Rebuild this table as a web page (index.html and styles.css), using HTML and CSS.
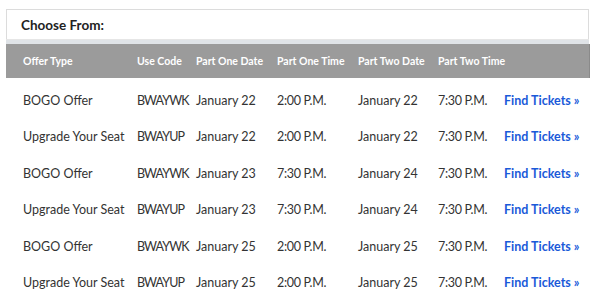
FILE: index.html
```html
<!DOCTYPE html>
<html>
<head>
<meta charset="utf-8">
<link rel="stylesheet" href="styles.css">
</head>
<body>
<div class="wrap">
  <div class="panel-title">Choose From:</div>
  <div class="strip"></div>
  <table class="offers">
    <colgroup>
      <col class="c1"><col class="c2"><col class="c3"><col class="c4"><col class="c5"><col class="c6"><col class="c7">
    </colgroup>
    <thead>
      <tr><th>Offer Type</th><th>Use Code</th><th>Part One Date</th><th>Part One Time</th><th>Part Two Date</th><th>Part Two Time</th><th></th></tr>
    </thead>
    <tbody>
      <tr><td>BOGO Offer</td><td class="code">BWAYWK</td><td>January 22</td><td class="time">2:00 P.M.</td><td>January 22</td><td class="time">7:30 P.M.</td><td><a href="#">Find Tickets »</a></td></tr>
      <tr><td>Upgrade Your Seat</td><td class="code">BWAYUP</td><td>January 22</td><td class="time">2:00 P.M.</td><td>January 22</td><td class="time">7:30 P.M.</td><td><a href="#">Find Tickets »</a></td></tr>
      <tr><td>BOGO Offer</td><td class="code">BWAYWK</td><td>January 23</td><td class="time">7:30 P.M.</td><td>January 24</td><td class="time">7:30 P.M.</td><td><a href="#">Find Tickets »</a></td></tr>
      <tr><td>Upgrade Your Seat</td><td class="code">BWAYUP</td><td>January 23</td><td class="time">7:30 P.M.</td><td>January 24</td><td class="time">7:30 P.M.</td><td><a href="#">Find Tickets »</a></td></tr>
      <tr><td>BOGO Offer</td><td class="code">BWAYWK</td><td>January 25</td><td class="time">2:00 P.M.</td><td>January 25</td><td class="time">7:30 P.M.</td><td><a href="#">Find Tickets »</a></td></tr>
      <tr><td>Upgrade Your Seat</td><td class="code">BWAYUP</td><td>January 25</td><td class="time">2:00 P.M.</td><td>January 25</td><td class="time">7:30 P.M.</td><td><a href="#">Find Tickets »</a></td></tr>
    </tbody>
  </table>
</div>
</body>
</html>
```
FILE: styles.css
```css
html, body {
  margin: 0;
  padding: 0;
  background: #fff;
}
body {
  font-family: Lato, "Noto Sans", sans-serif;
  color: #333;
}
.wrap {
  padding: 9px 9px 0 6px;
}
.panel-title {
  height: 30px;
  border: 1px solid #dcdcdc;
  border-bottom: none;
  box-sizing: border-box;
  padding-left: 14px;
  font-size: 13.5px;
  font-weight: 700;
  line-height: 31px;
  color: #222;
}
.strip {
  height: 4px;
  background: #dfe3e7;
  border-top: 1px solid #e6e6e6;
}
.offers {
  width: 583px;
  table-layout: fixed;
  border-collapse: collapse;
}
.c1 { width: 131px; }
.c2 { width: 59px; }
.c3 { width: 81px; }
.c4 { width: 81px; }
.c5 { width: 80px; }
.c6 { width: 66px; }
.c7 { width: 85px; }
.offers thead tr {
  background: #9b9b9b;
  height: 34px;
}
.offers th {
  text-align: left;
  font-size: 10.5px;
  font-weight: 700;
  color: #fff;
  padding: 0;
  white-space: nowrap;
}
.offers th:first-child,
.offers td:first-child {
  padding-left: 17px;
}
.offers th:last-child {
  border-right: 1px solid #8a8a8a;
}
.offers tbody tr {
  height: 36.5px;
}
.offers tbody tr:first-child {
  height: 40.5px;
}
.offers tbody tr:first-child td {
  padding-top: 5px;
}
.offers td {
  padding: 0;
  font-size: 12.5px;
  white-space: nowrap;
  color: #333;
}
.offers td.code {
  letter-spacing: -0.9px;
}
.offers td.time {
  letter-spacing: -0.3px;
}
.offers a {
  color: #1a5ad9;
  font-weight: 700;
  text-decoration: none;
}
```
